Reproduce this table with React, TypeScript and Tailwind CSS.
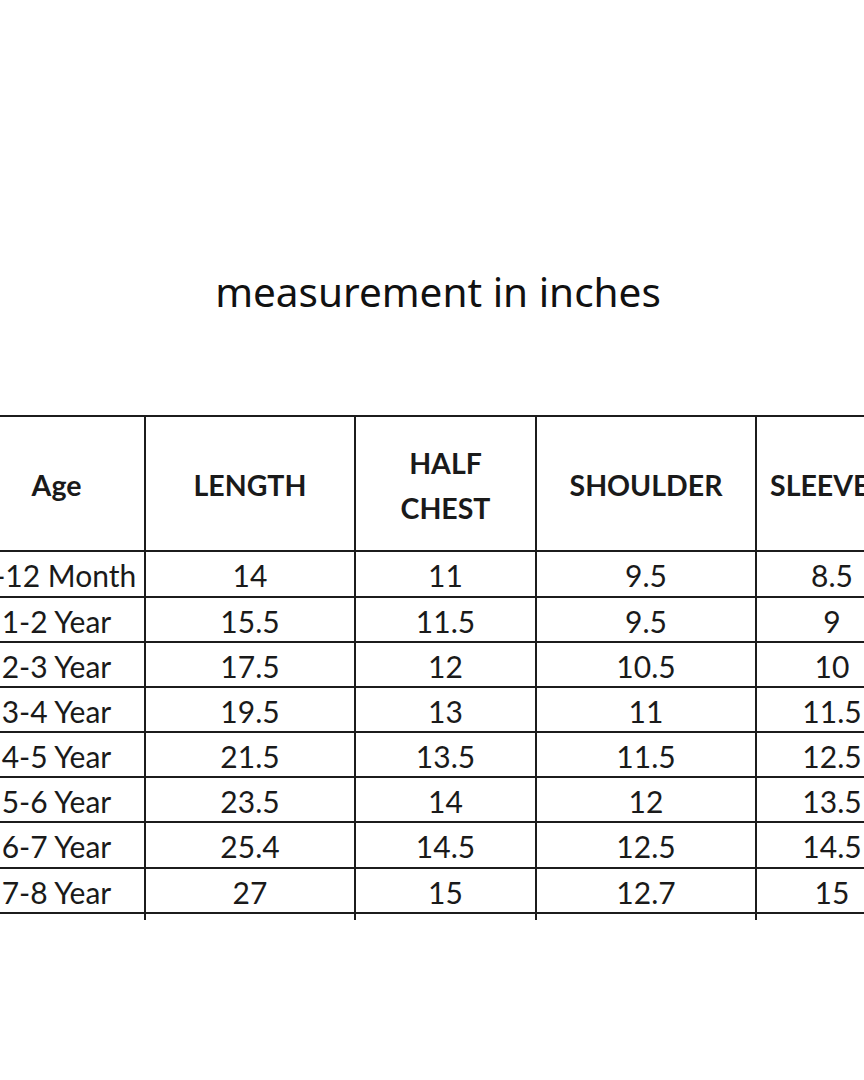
import React from "react";

const rows = [
  ["6-12 Month", "14", "11", "9.5", "8.5"],
  ["1-2 Year", "15.5", "11.5", "9.5", "9"],
  ["2-3 Year", "17.5", "12", "10.5", "10"],
  ["3-4 Year", "19.5", "13", "11", "11.5"],
  ["4-5 Year", "21.5", "13.5", "11.5", "12.5"],
  ["5-6 Year", "23.5", "14", "12", "13.5"],
  ["6-7 Year", "25.4", "14.5", "12.5", "14.5"],
  ["7-8 Year", "27", "15", "12.7", "15"],
  ["8-9 Year", "28", "15.5", "13", "15.5"],
];

const heights = ["h-[46px]", "h-[45px]", "h-[45px]", "h-[45px]", "h-[45px]", "h-[45px]", "h-[46px]", "h-[45px]", "h-[45px]"];

export default function App() {
  return (
    <div className="w-[864px] h-[1080px] bg-white overflow-hidden">
      <div className="pt-[272px] pl-[12px] text-center text-[40.5px] leading-none text-[#111]" style={{ fontFamily: '"Noto Sans", sans-serif' }}>
        measurement in inches
      </div>
      <div className="mt-[102px] h-[505px] overflow-hidden">
        <table
          className="ml-[-33px] w-[940px] table-fixed border-collapse text-[#1a1a1a]"
          style={{ fontFamily: 'Lato, "Open Sans", sans-serif' }}
        >
          <colgroup>
            <col className="w-[177px]" />
            <col className="w-[210px]" />
            <col className="w-[181px]" />
            <col className="w-[220px]" />
            <col className="w-[152px]" />
          </colgroup>
          <thead>
            <tr className="h-[135px]">
              {["Age", "LENGTH", "HALF\nCHEST", "SHOULDER"].map((h) => (
                <th
                  key={h}
                  className="border-2 border-[#1c1c1c] pt-[5px] text-center align-middle text-[28.5px] font-bold leading-[45px] whitespace-pre-line"
                >
                  {h}
                </th>
              ))}
              <th className="border-2 border-[#1c1c1c] pt-[5px] pl-[13px] text-left align-middle text-[28.5px] font-bold leading-[45px] whitespace-nowrap">
                SLEEVE
              </th>
            </tr>
          </thead>
          <tbody>
            {rows.map((r, ri) => (
              <tr key={r[0]} className={heights[ri]}>
                {r.map((c, i) => (
                  <td
                    key={i}
                    className="border-2 border-[#1c1c1c] pt-[3px] pb-0 px-0 text-center align-middle text-[30px] leading-[34px] whitespace-nowrap"
                  >
                    {c}
                  </td>
                ))}
              </tr>
            ))}
          </tbody>
        </table>
      </div>
    </div>
  );
}
